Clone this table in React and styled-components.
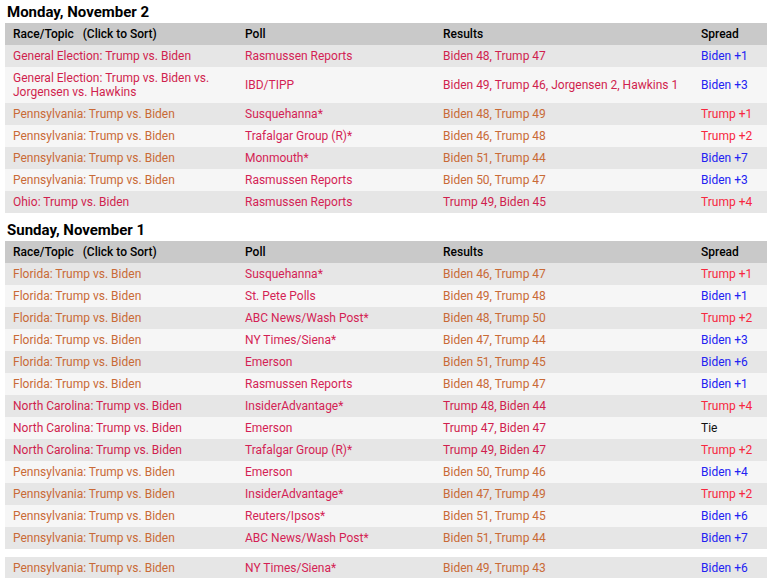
import styled, { createGlobalStyle } from "styled-components";

const GlobalStyle = createGlobalStyle`
  body {
    margin: 0;
    background: #fff;
    font-family: Roboto, "Liberation Sans", Arial, sans-serif;
    overflow: hidden;
  }
`;

const COLORS = {
  red: "#d01f4e",
  orange: "#c96a36",
  poll: "#d41f55",
  biden: "#2222f2",
  trump: "#f7283f",
  tie: "#111",
};

const monday = [
  ["General Election: Trump vs. Biden", "Rasmussen Reports", "Biden 48, Trump 47", "Biden +1", "red"],
  ["General Election: Trump vs. Biden vs. Jorgensen vs. Hawkins", "IBD/TIPP", "Biden 49, Trump 46, Jorgensen 2, Hawkins 1", "Biden +3", "red"],
  ["Pennsylvania: Trump vs. Biden", "Susquehanna*", "Biden 48, Trump 49", "Trump +1", "orange"],
  ["Pennsylvania: Trump vs. Biden", "Trafalgar Group (R)*", "Biden 46, Trump 48", "Trump +2", "orange"],
  ["Pennsylvania: Trump vs. Biden", "Monmouth*", "Biden 51, Trump 44", "Biden +7", "orange"],
  ["Pennsylvania: Trump vs. Biden", "Rasmussen Reports", "Biden 50, Trump 47", "Biden +3", "orange"],
  ["Ohio: Trump vs. Biden", "Rasmussen Reports", "Trump 49, Biden 45", "Trump +4", "red"],
];

const sunday = [
  ["Florida: Trump vs. Biden", "Susquehanna*", "Biden 46, Trump 47", "Trump +1", "orange"],
  ["Florida: Trump vs. Biden", "St. Pete Polls", "Biden 49, Trump 48", "Biden +1", "orange"],
  ["Florida: Trump vs. Biden", "ABC News/Wash Post*", "Biden 48, Trump 50", "Trump +2", "orange"],
  ["Florida: Trump vs. Biden", "NY Times/Siena*", "Biden 47, Trump 44", "Biden +3", "orange"],
  ["Florida: Trump vs. Biden", "Emerson", "Biden 51, Trump 45", "Biden +6", "orange"],
  ["Florida: Trump vs. Biden", "Rasmussen Reports", "Biden 48, Trump 47", "Biden +1", "orange"],
  ["North Carolina: Trump vs. Biden", "InsiderAdvantage*", "Trump 48, Biden 44", "Trump +4", "red"],
  ["North Carolina: Trump vs. Biden", "Emerson", "Trump 47, Biden 47", "Tie", "red"],
  ["North Carolina: Trump vs. Biden", "Trafalgar Group (R)*", "Trump 49, Biden 47", "Trump +2", "red"],
  ["Pennsylvania: Trump vs. Biden", "Emerson", "Biden 50, Trump 46", "Biden +4", "orange"],
  ["Pennsylvania: Trump vs. Biden", "InsiderAdvantage*", "Biden 47, Trump 49", "Trump +2", "orange"],
  ["Pennsylvania: Trump vs. Biden", "Reuters/Ipsos*", "Biden 51, Trump 45", "Biden +6", "orange"],
  ["Pennsylvania: Trump vs. Biden", "ABC News/Wash Post*", "Biden 51, Trump 44", "Biden +7", "orange"],
];

const sundayMore = [
  ["Pennsylvania: Trump vs. Biden", "NY Times/Siena*", "Biden 49, Trump 43", "Biden +6", "orange"],
];

const spreadTone = (s) => (s.startsWith("Biden") ? "biden" : s.startsWith("Trump") ? "trump" : "tie");

const PollTable = ({ rows, header = true }) => (
  <Table>
    <colgroup>
      <RaceCol />
      <PollCol />
      <ResultCol />
      <col />
    </colgroup>
    {header && (
      <thead>
        <tr>
          <Th>Race/Topic&nbsp;&nbsp;&nbsp;(Click to Sort)</Th>
          <Th>Poll</Th>
          <Th>Results</Th>
          <Th>Spread</Th>
        </tr>
      </thead>
    )}
    <tbody>
      {rows.map(([race, poll, result, spread, tone], i) => (
        <Row key={i} $odd={i % 2 === 0}>
          <Cell $tone={tone}>{race}</Cell>
          <Cell $tone="poll">{poll}</Cell>
          <Cell $tone={tone}>{result}</Cell>
          <Cell $tone={spreadTone(spread)}>{spread}</Cell>
        </Row>
      ))}
    </tbody>
  </Table>
);

export default function App() {
  return (
    <Page>
      <GlobalStyle />
      <Section>
        <DayTitle>Monday, November 2</DayTitle>
        <PollTable rows={monday} />
      </Section>
      <Section>
        <DayTitle>Sunday, November 1</DayTitle>
        <PollTable rows={sunday} />
        <Spacer />
        <PollTable rows={sundayMore} header={false} />
      </Section>
    </Page>
  );
}

const Page = styled.div`
  width: 767px;
  padding-left: 5px;
  display: flex;
  flex-direction: column;
  gap: 5px;
`;

const Section = styled.section`
  display: flex;
  flex-direction: column;
`;

const DayTitle = styled.h2`
  margin: 0;
  padding: 2px 0 0 2px;
  height: 21px;
  font-size: 15px;
  font-weight: 700;
  line-height: 20px;
  color: #000;
`;

const Table = styled.table`
  width: 762px;
  border-collapse: collapse;
  table-layout: fixed;
  font-size: 12px;
`;

const RaceCol = styled.col`
  width: 232px;
`;

const PollCol = styled.col`
  width: 198px;
`;

const ResultCol = styled.col`
  width: 258px;
`;

const Th = styled.th`
  background: #c9c9c9;
  text-align: left;
  font-weight: 500;
  color: #000;
  padding: 4px 8px;
  line-height: 14px;
  white-space: nowrap;
`;

const Row = styled.tr`
  background: ${(p) => (p.$odd ? "#e6e6e6" : "#f6f6f6")};
`;

const Cell = styled.td`
  padding: 4px 8px;
  line-height: 14px;
  vertical-align: middle;
  color: ${(p) => COLORS[p.$tone]};
`;

const Spacer = styled.div`
  height: 8px;
`;
